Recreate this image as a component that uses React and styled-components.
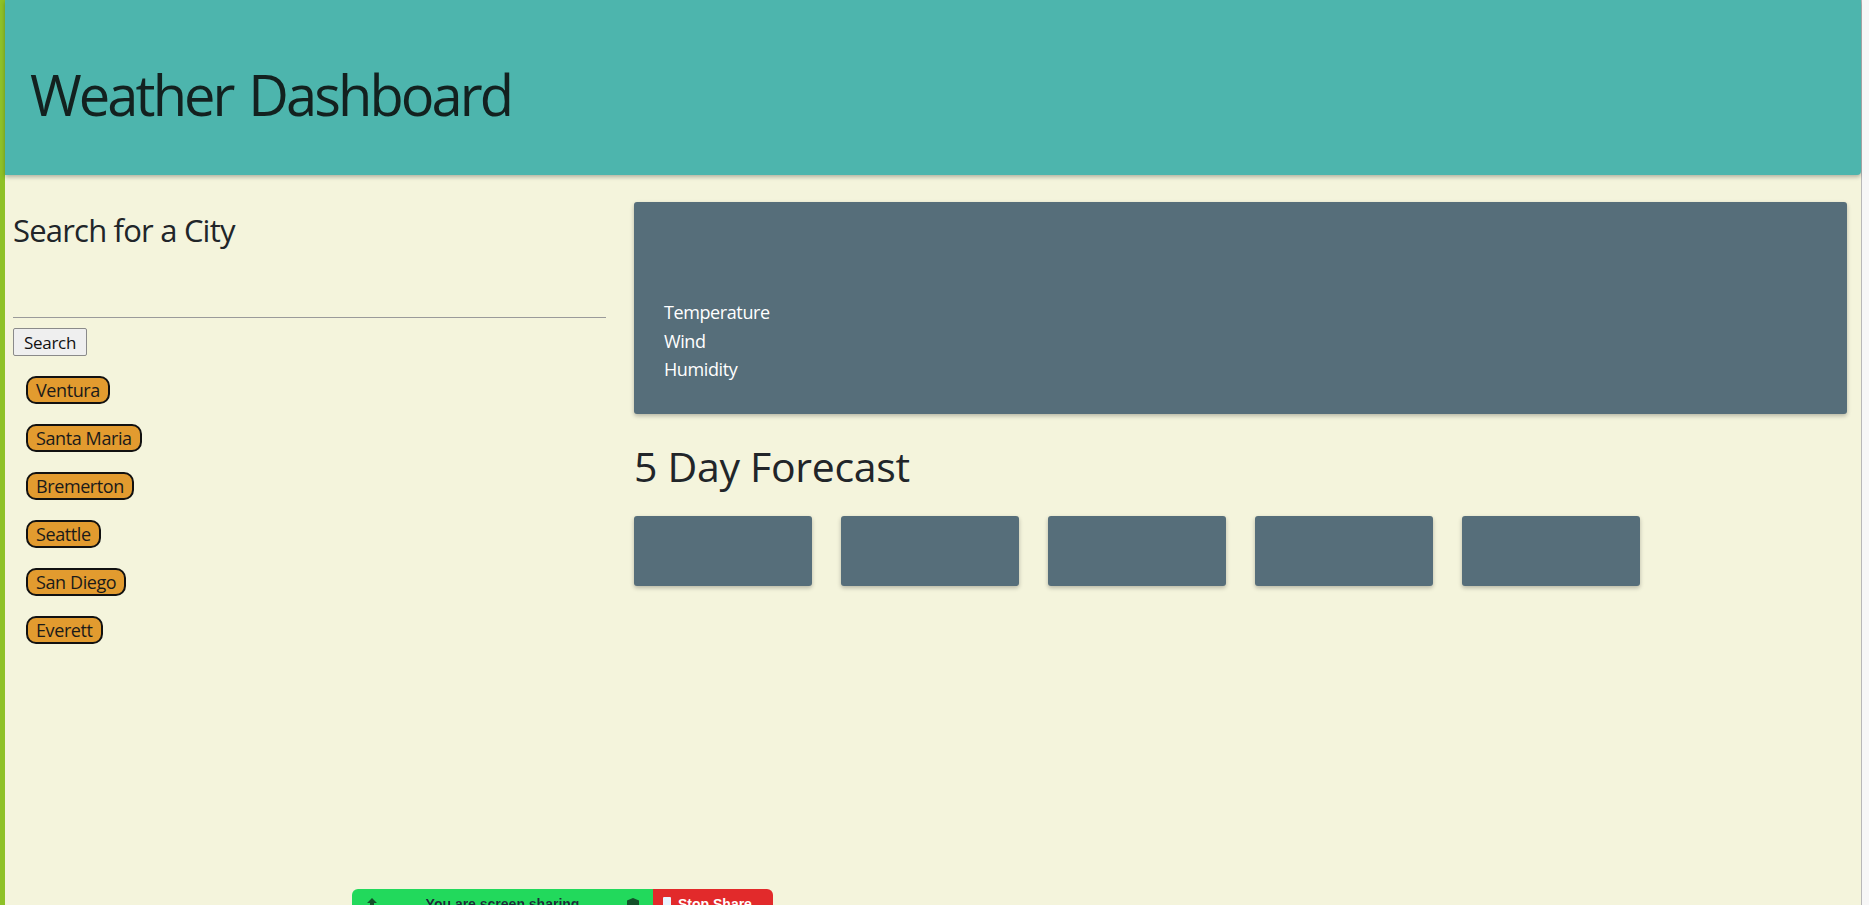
import React from 'react'
import styled, { createGlobalStyle } from 'styled-components'

const GlobalStyle = createGlobalStyle`
  html, body {
    margin: 0;
    padding: 0;
    height: 100%;
  }
  body {
    font-family: "Open Sans", "Noto Sans", sans-serif;
    background: #f7f7f7;
    color: #212529;
  }
  #root {
    height: 100%;
  }
`

const Frame = styled.div`
  height: 100vh;
  display: flex;
  overflow: hidden;
`

const Stripe = styled.div`
  width: 5px;
  background: #8ec127;
  flex-shrink: 0;
`

const Page = styled.div`
  flex: 1;
  background: #f4f4dc;
  border-right: 1px solid #b8b8b8;
  display: flex;
  flex-direction: column;
`

const Edge = styled.div`
  width: 7px;
  flex-shrink: 0;
  background: #f7f7f7;
`

const Header = styled.header`
  height: 175px;
  background: #4db5ad;
  box-shadow: 0 2px 4px rgba(0, 0, 0, 0.28);
  border-bottom-right-radius: 4px;
  display: flex;
  align-items: center;
  padding: 0 25px;
  box-sizing: border-box;
`

const Title = styled.h1`
  margin: 12px 0 0;
  font-size: 56px;
  font-weight: 400;
  letter-spacing: -2.9px;
  word-spacing: 4px;
  color: #13211f;
`

const Content = styled.main`
  display: grid;
  grid-template-columns: 593px 1fr;
  column-gap: 28px;
  padding: 27px 14px 0 8px;
`

const Sidebar = styled.section`
  display: flex;
  flex-direction: column;
  align-items: flex-start;
`

const SideTitle = styled.h3`
  margin: 10px 0 31px;
  font-size: 31px;
  font-weight: 400;
  line-height: 1.2;
  letter-spacing: -0.8px;
`

const SearchInput = styled.input`
  width: 100%;
  height: 38px;
  box-sizing: border-box;
  border: none;
  border-bottom: 1px solid #9a9a9a;
  background: transparent;
  outline: none;
  font: inherit;
`

const SearchButton = styled.button`
  margin-top: 10px;
  height: 28px;
  padding: 0 10px;
  font-family: "Open Sans", sans-serif;
  font-size: 17px;
  letter-spacing: -0.3px;
  color: #111;
  background: #efefef;
  border: 1px solid #8a8a8a;
  border-radius: 2px;
`

const CityList = styled.div`
  margin-top: 20px;
  padding-left: 13px;
  display: flex;
  flex-direction: column;
  align-items: flex-start;
  gap: 20px;
`

const CityButton = styled.button`
  height: 28px;
  box-sizing: border-box;
  padding: 0 8px;
  font-family: "Open Sans", sans-serif;
  font-size: 18px;
  letter-spacing: -0.4px;
  line-height: 1;
  color: #1a1a1a;
  background: #e29b2f;
  border: 2px solid #111;
  border-radius: 10px;
`

const Results = styled.section`
  display: flex;
  flex-direction: column;
`

const Card = styled.div`
  background: #566e7a;
  border-radius: 3px;
  box-shadow: 0 2px 4px rgba(0, 0, 0, 0.25);
`

const CurrentCard = styled(Card)`
  padding: 30px;
  color: #fff;
`

const CityName = styled.h2`
  margin: 0;
  min-height: 66px;
`

const Stat = styled.div`
  font-size: 18px;
  line-height: 28.5px;
  letter-spacing: -0.4px;
`

const ForecastTitle = styled.h2`
  margin: 28px 0 25px;
  font-size: 41px;
  font-weight: 400;
  line-height: 1.2;
  letter-spacing: -0.3px;
`

const ForecastRow = styled.div`
  display: flex;
  gap: 29px;
`

const DayCard = styled(Card)`
  width: 178px;
  height: 70px;
`

const ShareBar = styled.div`
  position: fixed;
  left: 352px;
  top: 889px;
  height: 32px;
  display: flex;
  border-radius: 6px;
  overflow: hidden;
  font-family: "Liberation Sans", Arial, sans-serif;
  font-size: 14px;
  font-weight: 700;
`

const SharePart = styled.div`
  width: 301px;
  background: #22d95c;
  color: #1d2a3a;
  display: flex;
  align-items: flex-start;
  padding: 6px 14px 0;
  box-sizing: border-box;
`

const ShareText = styled.span`
  flex: 1;
  text-align: center;
  margin-top: 1px;
`

const StopPart = styled.div`
  width: 120px;
  background: #e22a2b;
  color: #fff;
  display: flex;
  align-items: flex-start;
  gap: 7px;
  padding: 6px 10px 0;
  box-sizing: border-box;
`

const StopIcon = styled.span`
  width: 8px;
  height: 18px;
  margin-top: 2px;
  background: #e8f4ff;
  border-radius: 1px;
`

const StopText = styled.span`
  margin-top: 1px;
`

const cities = ['Ventura', 'Santa Maria', 'Bremerton', 'Seattle', 'San Diego', 'Everett']

export default function App() {
  return (
    <Frame>
      <GlobalStyle />
      <Stripe />
      <Page>
        <Header>
          <Title>Weather Dashboard</Title>
        </Header>
        <Content>
          <Sidebar>
            <SideTitle>Search for a City</SideTitle>
            <SearchInput type="text" />
            <SearchButton>Search</SearchButton>
            <CityList>
              {cities.map(city => <CityButton key={city}>{city}</CityButton>)}
            </CityList>
          </Sidebar>
          <Results>
            <CurrentCard>
              <CityName />
              <Stat>Temperature</Stat>
              <Stat>Wind</Stat>
              <Stat>Humidity</Stat>
            </CurrentCard>
            <ForecastTitle>5 Day Forecast</ForecastTitle>
            <ForecastRow>
              {[0, 1, 2, 3, 4].map(i => <DayCard key={i} />)}
            </ForecastRow>
          </Results>
        </Content>
      </Page>
      <Edge />
      <ShareBar>
        <SharePart>
          <svg width="12" height="14" viewBox="0 0 12 14" style={{ marginTop: 3 }}>
            <path d="M6 0 L11 5 H8 V14 H4 V5 H1 Z" fill="#14502a" />
          </svg>
          <ShareText>You are screen sharing</ShareText>
          <svg width="12" height="14" viewBox="0 0 12 14" style={{ marginTop: 3 }}>
            <path d="M6 0 L12 2.5 V7 C12 10.5 9 13 6 14 C3 13 0 10.5 0 7 V2.5 Z" fill="#14502a" />
          </svg>
        </SharePart>
        <StopPart>
          <StopIcon />
          <StopText>Stop Share</StopText>
        </StopPart>
      </ShareBar>
    </Frame>
  )
}
